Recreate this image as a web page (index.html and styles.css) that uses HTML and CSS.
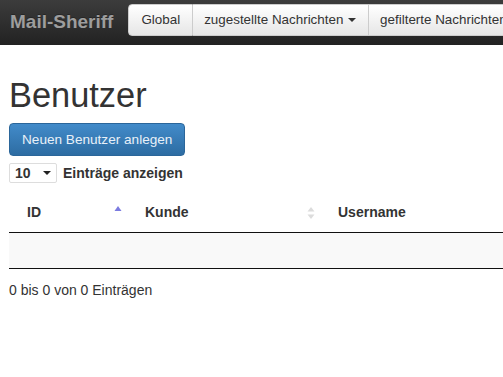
FILE: index.html
```html
<!DOCTYPE html>
<html>
  <head>
    <title>Mail-Sheriff - Benutzer</title>
    <link rel="stylesheet" href="styles.css">
  </head>
  <body>

    <nav class="navbar">
      <a class="brand" href="#">Mail-Sheriff</a>
      <div class="btn-group">
        <a class="nav-btn" href="#">Global</a>
        <a class="nav-btn" href="#">zugestellte Nachrichten <span class="caret"></span></a>
        <a class="nav-btn" href="#">gefilterte Nachrichten <span class="caret"></span></a>
      </div>
    </nav>

    <div class="content">
      <h1>Benutzer</h1>
      <button class="btn-primary">Neuen Benutzer anlegen</button>

      <div class="length">
        <div class="select">10 <span class="caret caret-dark"></span></div>
        <span class="length-label">Einträge anzeigen</span>
      </div>

      <div class="table-wrap">
        <table class="data-table">
          <thead>
            <tr>
              <th class="col-id">
                <span class="th-inner">ID
                  <svg class="sort-icon" width="8" height="16" viewBox="0 0 8 16">
                    <polygon points="0.5,6 7.5,6 4,1" fill="#7b7be0"/>
                  </svg>
                </span>
              </th>
              <th class="col-kunde">
                <span class="th-inner">Kunde
                  <svg class="sort-icon" width="8" height="16" viewBox="0 0 8 16">
                    <polygon points="0.5,6.5 7.5,6.5 4,2" fill="#dcdcdc"/>
                    <polygon points="0.5,9.5 7.5,9.5 4,14" fill="#dcdcdc"/>
                  </svg>
                </span>
              </th>
              <th class="col-user">
                <span class="th-inner">Username</span>
              </th>
            </tr>
          </thead>
          <tbody>
            <tr class="odd">
              <td></td>
              <td></td>
              <td></td>
            </tr>
          </tbody>
        </table>
      </div>

      <div class="info">0 bis 0 von 0 Einträgen</div>
    </div>

  </body>
</html>
```

FILE: styles.css
```css
body {
  margin: 0;
  font-family: "Liberation Sans", Arial, sans-serif;
  font-size: 14px;
  color: #333;
  background-color: white;
  overflow: hidden;
}
.navbar {
  display: flex;
  align-items: flex-start;
  height: 45px;
  background: linear-gradient(to bottom, #3c3c3c 0%, #222 100%);
  white-space: nowrap;
  overflow: hidden;
}
.brand {
  padding: 11px 15px 0 10px;
  font-size: 19px;
  font-weight: bold;
  color: #9d9d9d;
  text-decoration: none;
  text-shadow: 0 -1px 0 rgba(0, 0, 0, 0.25);
}
.btn-group {
  display: flex;
  margin-top: 4px;
  margin-left: 0;
}
.nav-btn {
  display: block;
  height: 30px;
  line-height: 30px;
  padding: 0 12px 0 11px;
  font-size: 13.4px;
  color: #333;
  text-decoration: none;
  background: linear-gradient(to bottom, #fff 0%, #e6e6e6 100%);
  border: 1px solid #ccc;
  border-left: none;
}
.nav-btn:first-child {
  border-left: 1px solid #ccc;
  border-radius: 4px 0 0 4px;
  padding-left: 12px;
}
.caret {
  display: inline-block;
  width: 0;
  height: 0;
  margin-left: 1px;
  vertical-align: middle;
  border-top: 4px solid #333;
  border-left: 4px solid transparent;
  border-right: 4px solid transparent;
}
.content {
  padding: 0 9px;
}
h1 {
  margin: 32px 0 9px 0;
  font-size: 34.4px;
  font-weight: normal;
  line-height: 37px;
  color: #333;
}
.btn-primary {
  display: block;
  height: 33px;
  padding: 0 12px;
  font-family: "Liberation Sans", Arial, sans-serif;
  font-size: 13.6px;
  color: #e8f0f8;
  background: linear-gradient(to bottom, #428bca 0%, #2d6ca2 100%);
  border: 1px solid #2b669a;
  border-radius: 4px;
}
.length {
  display: flex;
  align-items: center;
  margin-top: 7px;
}
.select {
  display: flex;
  align-items: center;
  justify-content: space-between;
  width: 36px;
  height: 18px;
  padding: 0 5px 0 5px;
  border: 1px solid #ddd;
  border-radius: 2px;
  font-weight: bold;
  font-size: 14px;
}
.caret-dark {
  border-top-width: 4px;
  border-top-color: #222;
}
.length-label {
  margin-left: 6px;
  font-weight: bold;
}
.table-wrap {
  margin-top: 10px;
  width: 720px;
}
.data-table {
  width: 100%;
  border-collapse: collapse;
}
.data-table th {
  padding: 10px 5px 10px 18px;
  text-align: left;
  font-weight: bold;
  line-height: 19px;
  border-bottom: 1px solid #111;
}
.th-inner {
  display: flex;
  justify-content: space-between;
  align-items: center;
}
.col-id {
  width: 95px;
}
.col-kunde {
  width: 170px;
}
.data-table td {
  height: 35px;
  padding: 0;
  border-bottom: 1px solid #111;
}
.odd {
  background-color: #f9f9f9;
}
.info {
  padding-top: 11px;
  line-height: 20px;
  color: #333;
}
```
